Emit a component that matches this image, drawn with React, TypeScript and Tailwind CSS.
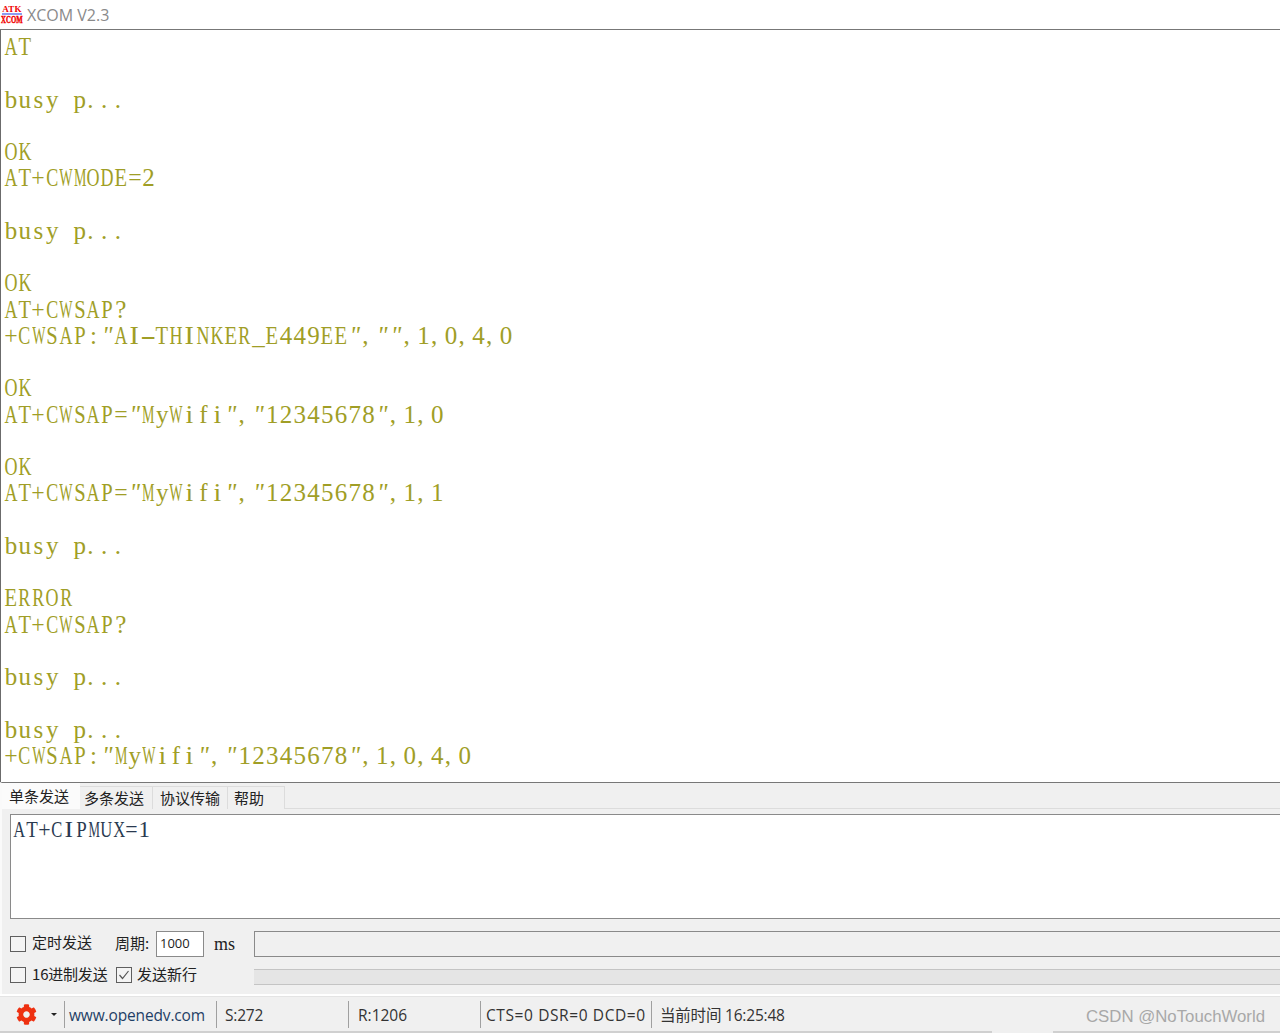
import { FaCog } from "react-icons/fa";

const LINES = [
  "AT", "", "busy p...", "", "OK", "AT+CWMODE=2", "", "busy p...", "", "OK",
  "AT+CWSAP?", '+CWSAP:"AI-THINKER_E449EE","",1,0,4,0', "", "OK",
  'AT+CWSAP="MyWifi","12345678",1,0', "", "OK", 'AT+CWSAP="MyWifi","12345678",1,1',
  "", "busy p...", "", "ERROR", "AT+CWSAP?", "", "busy p...", "", "busy p...",
  '+CWSAP:"MyWifi","12345678",1,0,4,0',
];

const CJK = '"Noto Sans CJK SC", sans-serif';

function squeeze(c: string) {
  if ("MW".includes(c)) return 0.56;
  if ("mw".includes(c)) return 0.68;
  if ("ACDGHKNOQRUVXY".includes(c)) return 0.72;
  if ("BEFLPSTZ".includes(c)) return 0.82;
  if (c === "I" || "il".includes(c)) return 1.12;
  if (c === "-") return 1.9;
  if (c === "+" || c === "=") return 0.95;
  return 1;
}

function shift(c: string) {
  if (c === "." || c === ",") return -3;
  return 0;
}

function Cell({ c, w }: { c: string; w: number }) {
  const quote = c === '"';
  return (
    <span className="inline-block text-center whitespace-pre" style={{ width: w }}>
      <span
        className={`inline-block ${quote ? "italic" : ""}`}
        style={{ transform: `translateX(${shift(c)}px) scaleX(${squeeze(c)})`, margin: "0 -8px" }}
      >
        {c}
      </span>
    </span>
  );
}

function MonoLine({ text, w = 13.75, className }: { text: string; w?: number; className?: string }) {
  return (
    <div className={`h-[26.26px] leading-[26.26px] whitespace-nowrap font-['Liberation_Serif',serif] ${className ?? "text-[25px]"}`}>
      {text.split("").map((c, i) => <Cell key={i} c={c} w={w} />)}
    </div>
  );
}

function Box({ checked }: { checked?: boolean }) {
  return (
    <span className="w-[16px] h-[16px] border border-[#5f5f5f] bg-[#f4f4f4] shrink-0 flex items-center justify-center">
      {checked && (
        <svg width="14" height="14" viewBox="0 0 14 14" fill="none" stroke="#555" strokeWidth="1.2">
          <path d="M2.5 7 L5.5 10.5 L11.5 3" />
        </svg>
      )}
    </span>
  );
}

function Tab({ label, w, extra }: { label: string; w: string; extra?: string }) {
  return (
    <div className={`${w} h-[23px] mt-[3px] bg-[#f0f0f0] border border-b-0 border-l-0 border-[#dcdcdc] flex items-center text-[15px] text-[#222] font-['Noto_Sans_CJK_SC',sans-serif] ${extra ?? ""}`}>
      {label}
    </div>
  );
}

function Status({ w, children }: { w: string; children: React.ReactNode }) {
  return (
    <div className={`${w} shrink-0 h-[27px] border-r border-[#a0a0a0] flex items-center pl-[8px] pt-[3px] whitespace-nowrap`}>
      {children}
    </div>
  );
}

export default function App() {
  return (
    <div className="w-[1280px] h-[1033px] overflow-hidden flex flex-col bg-[#f0f0f0]" style={{ fontFamily: CJK }}>
      <div className="h-[30px] shrink-0 bg-white border-b border-[#777] flex items-center pl-[2px]">
        <div className="w-[20px] h-[20px] flex flex-col items-center text-[#f00000] font-['Liberation_Serif',serif] font-bold leading-none">
          <span className="text-[9px] h-[8px] leading-[8px] tracking-[0.3px]">ATK</span>
          <span className="w-[20px] h-[2px] bg-[#8c9cf0]" />
          <span className="text-[10px] h-[9px] leading-[9px] scale-x-[0.68] [-webkit-text-stroke:0.4px_#f00000]">XCOM</span>
        </div>
        <span className="ml-[5px] text-[16px] text-[#8a8a8a] font-['Open_Sans',sans-serif]">XCOM V2.3</span>
      </div>

      <div className="h-[752px] shrink-0 bg-white border-l border-[#6b6b6b] pl-[3px] pt-[4px] text-[#a09e26] overflow-hidden">
        {LINES.map((l, i) => <MonoLine key={i} text={l} />)}
      </div>

      <div className="h-[212px] shrink-0 border-t border-[#777] border-l-2 border-l-[#fafafa] flex flex-col">
        <div className="h-[26px] shrink-0 flex border-b border-[#dcdcdc]">
          <div className="w-[78px] h-[26px] bg-[#fbfbfb] flex items-center pl-[7px] text-[15px] text-[#222] relative z-10">单条发送</div>
          <Tab label="多条发送" w="w-[73px]" extra="pl-[4px]" />
          <Tab label="协议传输" w="w-[75px]" extra="justify-center" />
          <Tab label="帮助" w="w-[57px]" extra="pl-[6px]" />
        </div>

        <div className="h-[105px] shrink-0 mt-[5px] ml-[8px] bg-white border border-r-0 border-[#8a8a8a] pl-[2px] pt-[2px] text-[#2a3a50]">
          <MonoLine text="AT+CIPMUX=1" w={12.5} className="text-[23px]" />
        </div>

        <div className="h-[26px] mt-[12px] ml-[8px] flex items-center text-[15px] text-[#222]">
          <Box />
          <span className="ml-[6px] w-[83px] pb-[3px]">定时发送</span>
          <span className="w-[41px] pb-[1px]">周期:</span>
          <div className="w-[48px] h-[26px] bg-white border border-[#8a8a8a] text-[13px] pl-[3px] leading-[22px] font-['Open_Sans',sans-serif]">1000</div>
          <span className="ml-[10px] w-[40px] text-[18px] font-['Liberation_Serif',serif]">ms</span>
          <div className="flex-1 h-[26px] border border-r-0 border-[#8a8a8a] bg-[#f0f0f0]" />
        </div>

        <div className="h-[16px] mt-[10px] ml-[8px] flex items-center text-[15px] text-[#222]">
          <Box />
          <span className="ml-[6px] w-[84px] pb-[1px] tracking-[-0.2px]">16进制发送</span>
          <Box checked />
          <span className="ml-[5px] w-[117px] pb-[1px]">发送新行</span>
          <div className="flex-1 h-[16px] mt-[4px] border-y border-[#c4c4c4] bg-[#e5e5e5]" />
        </div>
      </div>

      <div className="h-[2px] shrink-0 bg-white" />
      <div className="h-[35px] shrink-0 border-t border-[#e4e4e4] bg-[#f0f0f0] flex items-center relative text-[15.5px] text-[#333] font-['Open_Sans',sans-serif] tracking-[-0.2px]">
        <div className="w-[65px] h-[27px] shrink-0 border-r border-[#a0a0a0] flex items-center pl-[16px]">
          <FaCog className="text-[#ee3010] w-[21px] h-[21px]" />
          <span className="ml-[14px] w-0 h-0 border-x-[3px] border-x-transparent border-t-[3px] border-t-[#222]" />
        </div>
        <Status w="w-[152px] !pl-[4px]"><span className="text-[#1f3f66] tracking-[-0.15px]">www.openedv.com</span></Status>
        <Status w="w-[132px]">S:272</Status>
        <Status w="w-[132px]"><span className="tracking-[0px] ml-[1px]">R:1206</span></Status>
        <Status w="w-[171px] !pl-[5px]"><span className="tracking-[0.6px]">CTS=0 DSR=0 DCD=0</span></Status>
        <div className="pl-[8px] pt-[3px] whitespace-nowrap" style={{ fontFamily: '"Open Sans", "Noto Sans CJK SC", sans-serif' }}>当前时间 16:25:48</div>
        <span className="absolute left-[1086px] top-[9px] text-[16.8px] leading-[22px] text-[#a8a8a8] tracking-normal font-['Liberation_Sans',sans-serif]">CSDN @NoTouchWorld</span>
      </div>
      <div className="flex-1 flex bg-[#d0d0d0]">
        <div className="w-[992px]" />
        <div className="w-[61px] bg-[#f0f0f0]" />
      </div>
    </div>
  );
}
